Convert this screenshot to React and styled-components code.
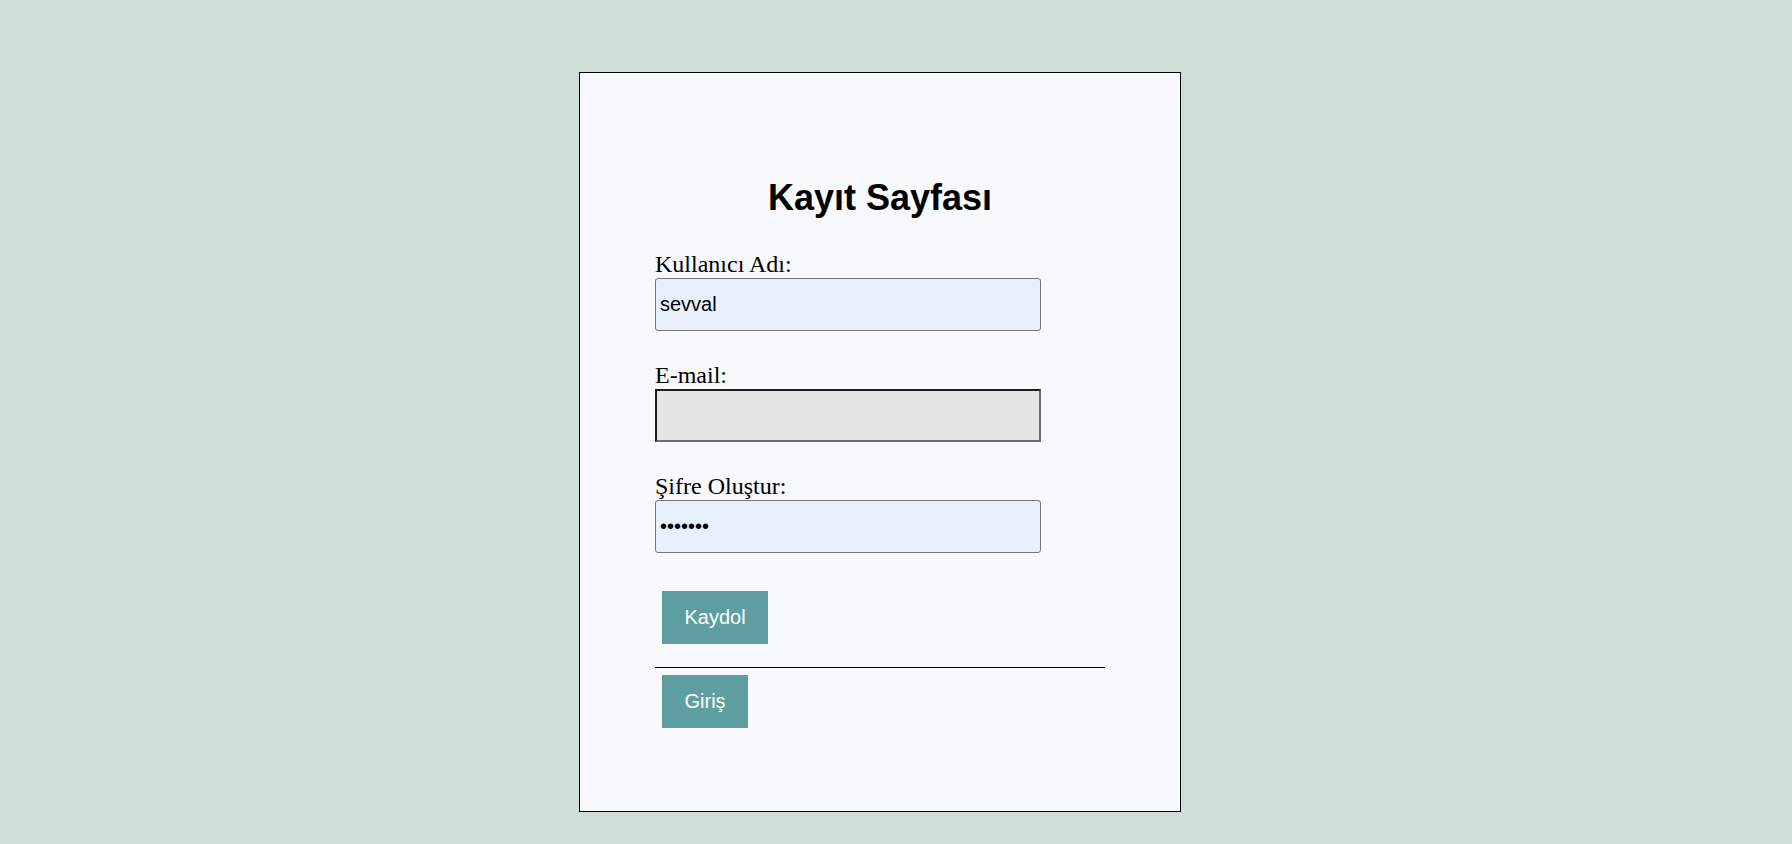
import React from "react";
import styled, { createGlobalStyle } from "styled-components";

const GlobalStyle = createGlobalStyle`
  html, body {
    margin: 0;
    padding: 0;
    background-color: #cfded7;
    min-height: 100%;
  }
  body {
    font-family: "Liberation Serif", "Times New Roman", serif;
  }
`;

const Page = styled.div`
  min-height: 844px;
  box-sizing: border-box;
  padding: 72px 0 0 579px;
`;

const Card = styled.div`
  width: 450px;
  background-color: #f8f9fd;
  border: 1px solid #000;
  padding: 104px 75px 83px;
`;

const Title = styled.h1`
  margin: 0 0 31px;
  font-family: "Liberation Sans", Arial, sans-serif;
  font-size: 36px;
  font-weight: bold;
  text-align: center;
  color: #000;
`;

const Form = styled.form`
  display: flex;
  flex-direction: column;
  align-items: flex-start;
`;

const Label = styled.label`
  display: block;
  font-size: 24px;
  line-height: 28px;
  color: #000;
`;

const Input = styled.input`
  box-sizing: border-box;
  width: 386px;
  height: 53px;
  margin: 0 0 ${(p) => (p.last ? "38px" : "30px")};
  padding: 0 4px;
  font-family: "Liberation Sans", Arial, sans-serif;
  font-size: 20px;
  color: #000;
  background-color: #e8f0fe;
  border: 1px solid #767676;
  border-radius: 3px;
  outline: none;
`;

const EmailInput = styled(Input)`
  background-color: #e5e5e5;
  border-radius: 0;
  border-width: 2px;
  border-style: solid;
  border-color: #1e1e1e #6d6d6d #6d6d6d #1e1e1e;
`;

const Button = styled.button`
  margin: 0 0 0 7px;
  padding: 15px 22.5px;
  font-family: "Liberation Sans", Arial, sans-serif;
  font-size: 20px;
  line-height: 23px;
  color: #fff;
  background-color: #5f9ea0;
  border: none;
  cursor: pointer;
`;

const Divider = styled.hr`
  width: 100%;
  margin: 23px 0 7px;
  border: none;
  border-top: 1px solid #000;
  height: 0;
`;

export default function App() {
  return (
    <>
      <GlobalStyle />
      <Page>
        <Card>
          <Title>Kayıt Sayfası</Title>
          <Form onSubmit={(e) => e.preventDefault()}>
            <Label htmlFor="username">Kullanıcı Adı:</Label>
            <Input id="username" type="text" defaultValue="sevval" />
            <Label htmlFor="email">E-mail:</Label>
            <EmailInput id="email" type="email" />
            <Label htmlFor="password">Şifre Oluştur:</Label>
            <Input id="password" type="password" defaultValue="1234567" last />
            <Button type="submit">Kaydol</Button>
            <Divider />
            <Button type="button">Giriş</Button>
          </Form>
        </Card>
      </Page>
    </>
  );
}
